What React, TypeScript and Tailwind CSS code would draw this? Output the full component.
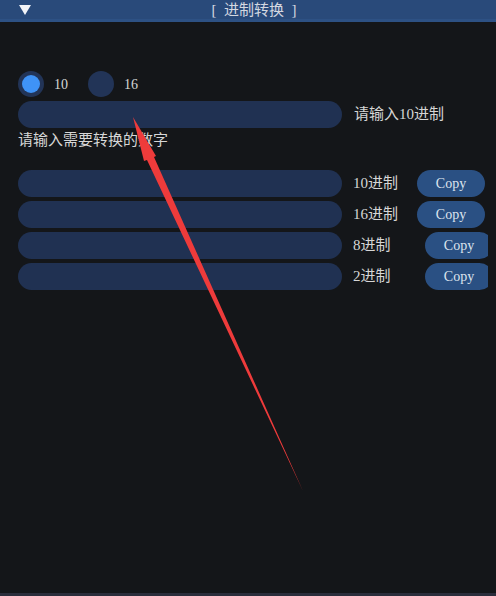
import React, { useState } from 'react';

// ImGui-style "进制转换" window with an annotation arrow drawn over it
const font = { fontFamily: '"Liberation Serif", "Noto Sans CJK SC", serif' };

interface OutRow {
  label: string;
  labelW: string;
}

const rows: OutRow[] = [
  { label: '10进制', labelW: 'w-[64px]' },
  { label: '16进制', labelW: 'w-[64px]' },
  { label: '8进制', labelW: 'w-[72px]' },
  { label: '2进制', labelW: 'w-[72px]' },
];

const Radio = ({ on, label, onClick }: { on: boolean; label: string; onClick: () => void }) => (
  <button onClick={onClick} className="flex items-center gap-[10px]">
    <span className="w-[26px] h-[26px] rounded-full bg-[#223457] flex items-center justify-center">
      {on && <span className="w-[18px] h-[18px] rounded-full bg-[#3f93f6]" />}
    </span>
    <span className="text-[14px] text-[#d6d6d6]">{label}</span>
  </button>
);

const App = () => {
  const [base, setBase] = useState(10);

  return (
    <div
      className="relative w-[496px] h-[596px] bg-[#141619] overflow-hidden border-b-[3px] border-[#2a2d3b]"
      style={font}
    >
      <div className="h-[22px] bg-[#294a7a] border-b-[3px] border-[#2d5184] flex items-center relative">
        <svg className="absolute left-[19px] top-[5px]" width="12" height="10" viewBox="0 0 12 10">
          <polygon points="0,0 12,0 6,10" fill="#f2f4f8" />
        </svg>
        <div className="flex-1 text-center pl-[12px] text-[15px] leading-[18px] text-[#d4d8e0]">
          [&nbsp;&nbsp;进制转换&nbsp;&nbsp;]
        </div>
      </div>

      <div className="pl-[18px] pt-[49px]">
        <div className="flex items-center gap-[20px] h-[26px]">
          <Radio on={base === 10} label="10" onClick={() => setBase(10)} />
          <Radio on={base === 16} label="16" onClick={() => setBase(16)} />
        </div>

        <div className="flex items-center mt-[4px]">
          <div className="w-[324px] h-[27px] rounded-full bg-[#203152]" />
          <span className="ml-[12px] text-[15px] text-[#d6d6d6]">请输入{base}进制</span>
        </div>

        <div className="mt-[2px] h-[20px] leading-[20px] text-[15px] text-[#d6d6d6]">
          请输入需要转换的数字
        </div>

        <div className="mt-[20px] w-[470px] overflow-hidden flex flex-col gap-[4px]">
          {rows.map(r => (
            <div key={r.label} className="flex items-center h-[27px] shrink-0">
              <div className="w-[324px] h-[27px] rounded-full bg-[#203152] shrink-0" />
              <span className={`ml-[11px] ${r.labelW} shrink-0 text-[15px] text-[#d6d6d6]`}>{r.label}</span>
              <button className="w-[68px] h-[27px] shrink-0 rounded-full bg-[#2a5083] text-[14px] text-[#dde4ee]">
                Copy
              </button>
            </div>
          ))}
        </div>
      </div>

      <svg className="absolute left-0 top-0 pointer-events-none" width="496" height="596">
        <polygon
          points="133,117 156,156 154,157 303,491 147,160 144,161"
          fill="#ee3b3b"
        />
      </svg>
    </div>
  );
};

export default App;
